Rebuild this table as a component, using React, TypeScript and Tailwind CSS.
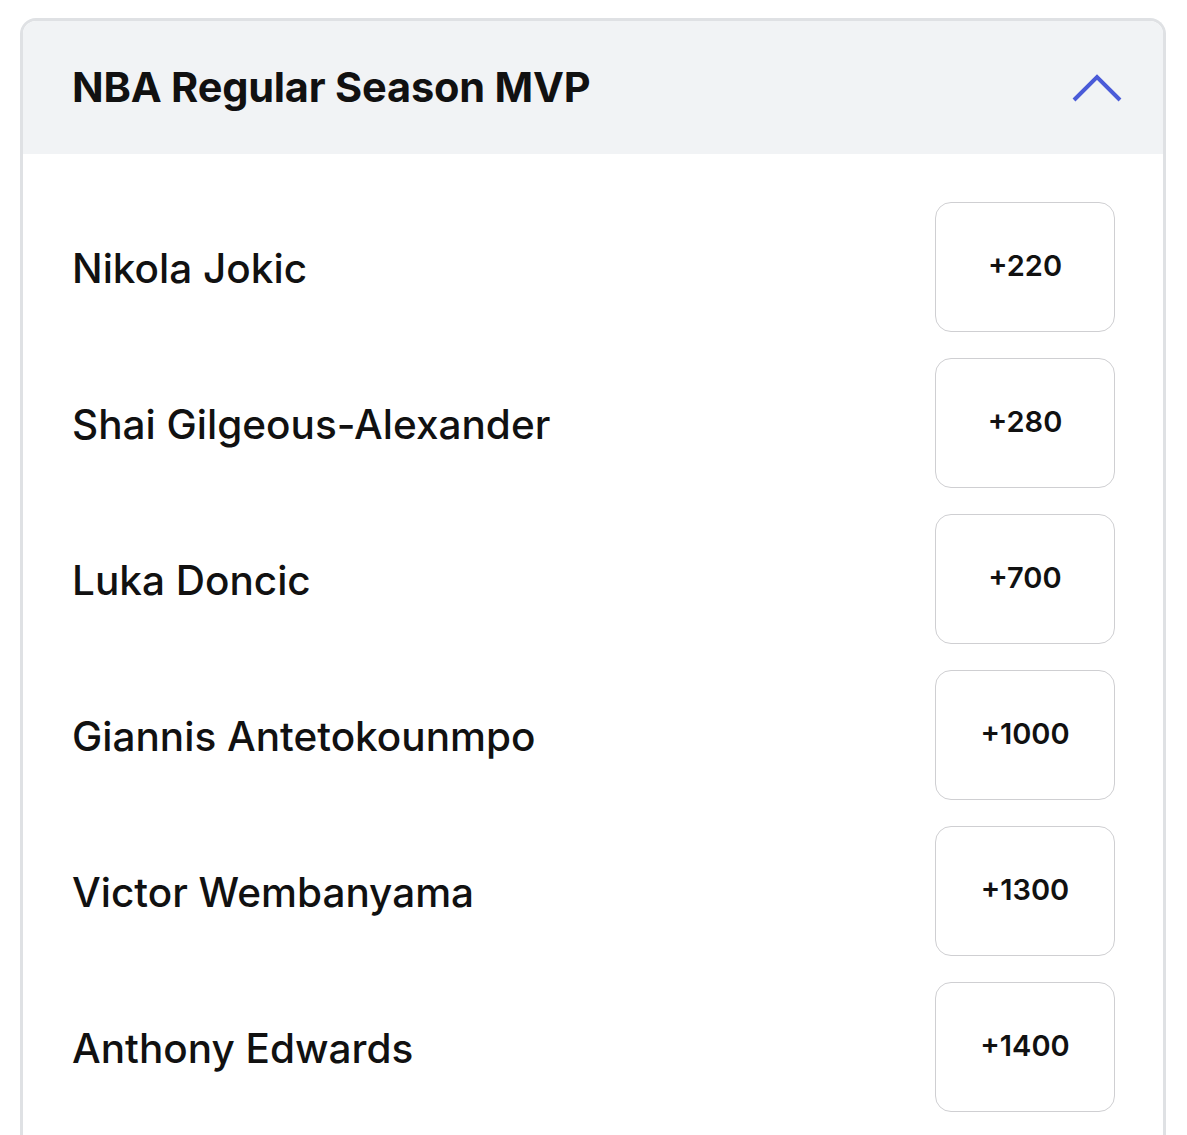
import React from "react";

const players = [
  { name: "Nikola Jokic", odds: "+220" },
  { name: "Shai Gilgeous-Alexander", odds: "+280" },
  { name: "Luka Doncic", odds: "+700" },
  { name: "Giannis Antetokounmpo", odds: "+1000" },
  { name: "Victor Wembanyama", odds: "+1300" },
  { name: "Anthony Edwards", odds: "+1400" },
];

const App = () => {
  return (
    <div className="h-[1135px] w-[1187px] overflow-hidden bg-white pl-[20px] pr-[21px] pt-[18px] font-['Inter',sans-serif] text-[#111]">
      <div className="overflow-hidden rounded-t-[16px] border-[3px] border-b-0 border-[#dfe1e4]">
        <div className="flex h-[133px] items-center justify-between bg-[#f1f3f5] pl-[49px] pr-[40px]">
          <h1 className="text-[41.5px] font-bold tracking-[-0.2px]">NBA Regular Season MVP</h1>
          <svg width="52" height="30" viewBox="0 0 52 30" fill="none">
            <path d="M3 27 L26 4 L49 27" stroke="#4a5bd8" strokeWidth="4" />
          </svg>
        </div>
        <div className="flex flex-col gap-[26px] bg-white pb-[40px] pl-[49px] pr-[48px] pt-[48px]">
          {players.map((p) => (
            <div key={p.name} className="flex items-center justify-between">
              <span className="pt-[4px] text-[40.5px] font-medium">{p.name}</span>
              <button className="flex h-[130px] w-[180px] items-center justify-center rounded-[16px] border border-[#cfcfd2] bg-white pb-[2px] text-[29px] font-semibold">
                {p.odds}
              </button>
            </div>
          ))}
        </div>
      </div>
    </div>
  );
};

export default App;
